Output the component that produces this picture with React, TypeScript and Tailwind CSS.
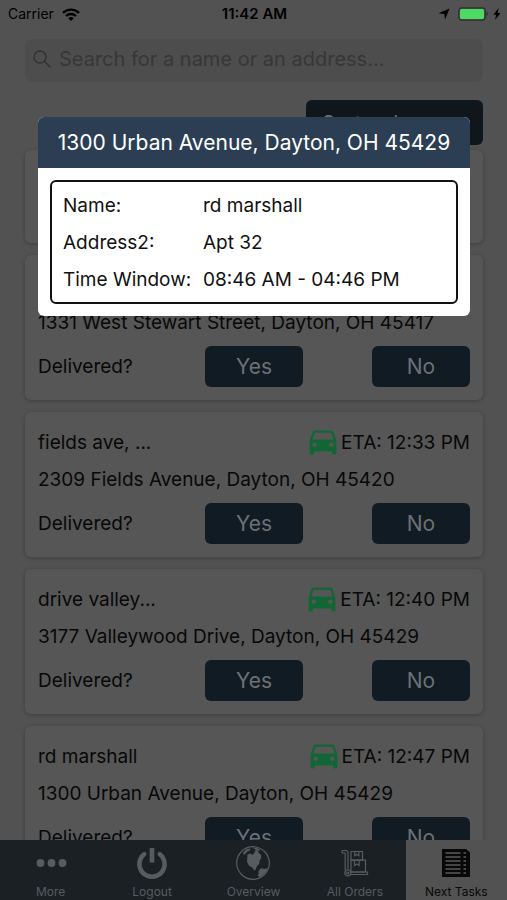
import { useState } from "react";
import type { ReactNode } from "react";
import { MdDirectionsCar } from "react-icons/md";

type Order = {
  name: string;
  eta: string;
  address: string;
  open: boolean;
};

const orders: Order[] = [
  {
    name: "rd marshall",
    eta: "12:19 PM",
    address: "1300 Urban Avenue, Dayton, OH",
    open: false,
  },
  {
    name: "west stew...",
    eta: "12:26 PM",
    address: "1331 West Stewart Street, Dayton, OH 45417",
    open: true,
  },
  {
    name: "fields ave, ...",
    eta: "12:33 PM",
    address: "2309 Fields Avenue, Dayton, OH 45420",
    open: true,
  },
  {
    name: "drive valley...",
    eta: "12:40 PM",
    address: "3177 Valleywood Drive, Dayton, OH 45429",
    open: true,
  },
  {
    name: "rd marshall",
    eta: "12:47 PM",
    address: "1300 Urban Avenue, Dayton, OH 45429",
    open: true,
  },
];

const details = [
  { label: "Name:", value: "rd marshall" },
  { label: "Address2:", value: "Apt 32" },
  { label: "Time Window:", value: "08:46 AM - 04:46 PM" },
];

const MoreIcon = () => (
  <svg viewBox="0 0 36 36" className="size-9" fill="currentColor">
    <circle cx="7.5" cy="18" r="3.9" />
    <circle cx="18.5" cy="18" r="3.9" />
    <circle cx="29.5" cy="18" r="3.9" />
  </svg>
);

const PowerIcon = () => (
  <svg
    viewBox="0 0 36 36"
    className="size-9"
    fill="none"
    stroke="currentColor"
    strokeWidth="4.6"
    strokeLinecap="round"
  >
    <path d="M10.2 9.2a12.6 12.6 0 1 0 15.6 0" />
    <path d="M18 3v14.5" strokeLinecap="butt" />
  </svg>
);

const GlobeIcon = () => (
  <svg viewBox="0 0 36 36" className="size-9">
    <circle
      cx="18"
      cy="18"
      r="16.3"
      fill="none"
      stroke="currentColor"
      strokeWidth="1.2"
    />
    <path
      fill="currentColor"
      d="M8.5 7 12 4l3.5-.5-.8 2-3 1.5-1.2 2L8 9.5z"
    />
    <path
      fill="currentColor"
      d="m12.5 9.5 3-1 1.8 1.5 2.2-2.2 1-2.8 2.5.6.8 2.7 2 1.2.6 3.2-1.8 2.8-.4 3.5-2.2 2-1.4 3.8-1.6.8-1.5-3-3.5-1.8-2-4z"
    />
    <path
      fill="currentColor"
      d="m23.5 26 2.5-2.7 3.5.7 3.2-.8-1.8 3.8-3.4 3.6-3 1.6-1.8-2 1-1.8z"
    />
    <path fill="currentColor" d="m17 2.5 6 .8 2.5 1.7-2 .8-2.5-1z" />
  </svg>
);

const TrolleyIcon = () => (
  <svg
    viewBox="0 0 36 36"
    className="size-9"
    fill="none"
    stroke="currentColor"
    strokeWidth="1.2"
  >
    <path d="M5 5.5h4.6l1.4 1.4v18.2M5 8h3.2v17.5M5 5.5V8" />
    <circle cx="10.8" cy="28" r="3" />
    <circle cx="10.8" cy="28" r="1" />
    <path d="M13.8 27h16.7v2.5H13.5" />
    <path d="M14 6.5h11.5v8.7H14zM17.8 6.5v4.2l2-1.3 2 1.3V6.5" />
    <path d="M14 15.2h14.5V27H14zM17.5 15.2v5.3l2.3-1.5 2.3 1.5v-5.3" />
  </svg>
);

const TasksIcon = () => (
  <svg viewBox="0 0 36 36" className="size-9">
    <path fill="currentColor" d="M4 4h24l4 3.5V32H4z" />
    <g stroke="#5a5a5a" strokeWidth="1.6">
      <path d="M7.5 8h15M7.5 12h15M7.5 16h15M7.5 20h15M7.5 24h15M7.5 28h15" />
      <path d="M25.5 8H28M25.5 12H28M25.5 16H28M25.5 20H28M25.5 24H28M25.5 28H28" />
    </g>
  </svg>
);

const tabs: { label: string; icon: ReactNode }[] = [
  { label: "More", icon: <MoreIcon /> },
  { label: "Logout", icon: <PowerIcon /> },
  { label: "Overview", icon: <GlobeIcon /> },
  { label: "All Orders", icon: <TrolleyIcon /> },
  { label: "Next Tasks", icon: <TasksIcon /> },
];

function StatusBar() {
  return (
    <header className="grid h-7 shrink-0 grid-cols-3 items-center pr-[6px] pl-2 text-[14px] text-black">
      <div className="flex items-center gap-2">
        <span>Carrier</span>
        <svg viewBox="0 0 18 13" className="h-[13px] w-[18px]">
          <g fill="none" stroke="currentColor" strokeWidth="2.3">
            <path d="M1 4.8a11.5 11.5 0 0 1 16 0" />
            <path d="M4 8a7.2 7.2 0 0 1 10 0" />
          </g>
          <path fill="currentColor" d="M6.2 10.2a4.2 4.2 0 0 1 5.6 0L9 13z" />
        </svg>
      </div>
      <span className="text-center text-[15px] font-semibold">11:42 AM</span>
      <div className="flex items-center justify-end gap-1">
        <svg viewBox="0 0 12 12" className="mr-1 size-3">
          <path fill="currentColor" d="M11.5.5 7 11.5 6.3 5.9.5 5.2z" />
        </svg>
        <svg viewBox="0 0 31 14" className="h-[14px] w-[31px]">
          <rect
            x=".8"
            y=".8"
            width="26.4"
            height="12.4"
            rx="3"
            fill="none"
            stroke="#303030"
            strokeWidth="1.2"
          />
          <rect x="2" y="2" width="24" height="10" rx="1.5" fill="#4cd964" />
          <path fill="#303030" d="M28.5 4.8a2.4 2.4 0 0 1 0 4.4z" />
        </svg>
        <svg viewBox="0 0 8 12" className="h-3 w-2">
          <path fill="currentColor" d="M5.6 0 .4 6.8h2.8L2 12l5.6-7H4.6z" />
        </svg>
      </div>
    </header>
  );
}

function OrderCard({ order }: { order: Order }) {
  return (
    <li className="rounded-md bg-[#565656] px-[13px] pt-3 shadow-[0_1px_4px_rgba(0,0,0,0.25)]">
      <div className="flex h-[37px] items-center justify-between">
        <span>{order.name}</span>
        <span className="flex items-center">
          <MdDirectionsCar className="mb-1 size-9 text-[#126636]" />
          ETA: {order.eta}
        </span>
      </div>
      <p className="flex h-[37px] items-center whitespace-nowrap">
        {order.address}
      </p>
      {order.open ? (
        <div className="mt-[5px] flex items-center pb-[13px]">
          <span className="w-[167px]">Delivered?</span>
          <button className="h-[41px] w-[98px] rounded-md bg-[#111b23] text-[21px] text-[#6c7176]">
            Yes
          </button>
          <button className="ml-auto h-[41px] w-[98px] rounded-md bg-[#111b23] text-[21px] text-[#6c7176]">
            No
          </button>
        </div>
      ) : (
        <div className="h-[7px]" />
      )}
    </li>
  );
}

export default function App() {
  const [active, setActive] = useState("Next Tasks");

  return (
    <div className="relative flex h-screen flex-col overflow-hidden bg-[#525252] font-['Inter',sans-serif] text-[19px] leading-6 text-[#080808]">
      <StatusBar />

      <main className="min-h-0 flex-1 overflow-hidden pt-[11px] pr-6 pl-[25px]">
        <label className="flex h-[43px] items-center gap-2 rounded-lg bg-[#4d4d4d] px-2 pb-[3px]">
          <svg
            viewBox="0 0 18 18"
            className="size-[18px] shrink-0"
            fill="none"
            stroke="#333333"
            strokeWidth="1.5"
          >
            <circle cx="7" cy="7" r="6" />
            <path d="m11.3 11.3 6 6" />
          </svg>
          <input
            type="text"
            aria-label="Search"
            placeholder="Search for a name or an address..."
            className="min-w-0 flex-1 bg-transparent text-[20px] outline-none placeholder:text-[#373737]"
          />
        </label>

        <div className="mt-[18px] flex justify-end">
          <button className="h-[45px] w-[177px] rounded-md bg-[#0f171d] px-4 text-left text-[20px] text-[#6c7176]">
            Sort orders
          </button>
        </div>

        <ul className="mt-[5px] flex flex-col gap-3">
          {orders.map((order) => (
            <OrderCard key={order.eta} order={order} />
          ))}
        </ul>
      </main>

      <nav className="grid h-[60px] shrink-0 grid-cols-5 bg-[#1b2025]">
        {tabs.map((tab) => (
          <button
            key={tab.label}
            onClick={() => setActive(tab.label)}
            className={`flex flex-col items-center gap-[3px] pt-[5px] text-[12px] leading-4 ${
              active === tab.label
                ? "bg-[#525252] text-[#080808]"
                : "text-[#585c5f]"
            }`}
          >
            {tab.icon}
            {tab.label}
          </button>
        ))}
      </nav>

      <div
        role="dialog"
        aria-labelledby="stop-title"
        className="absolute top-[117px] right-[37px] left-[38px] overflow-hidden rounded-md bg-white"
      >
        <h2
          id="stop-title"
          className="flex h-[51px] items-center justify-center whitespace-nowrap bg-[#2c3e53] text-[21px] text-white"
        >
          1300 Urban Avenue, Dayton, OH 45429
        </h2>
        <div className="p-3">
          <dl className="rounded-md border-2 border-[#111111] px-[11px] pt-[5px] pb-1 text-[#111111]">
            {details.map((row) => (
              <div key={row.label} className="flex h-[37px] items-center">
                <dt className="w-[140px] shrink-0">{row.label}</dt>
                <dd>{row.value}</dd>
              </div>
            ))}
          </dl>
        </div>
      </div>
    </div>
  );
}
